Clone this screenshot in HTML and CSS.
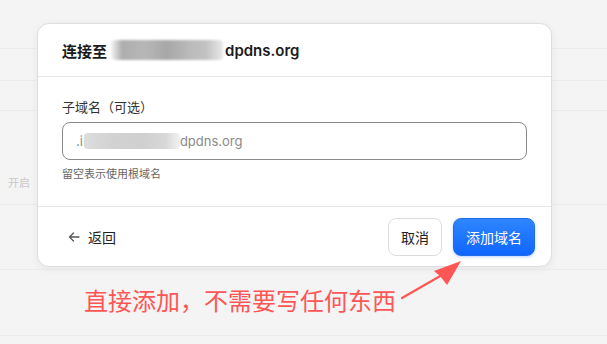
FILE: index.html
```html
<!DOCTYPE html>
<html lang="zh">
<head>
<meta charset="utf-8">
<link rel="stylesheet" href="styles.css">
</head>
<body>
<div class="backdrop">
  <div class="row r1"></div>
  <div class="row r2"></div>
  <div class="row r3"></div>
  <div class="row r4"><span class="faint">开启</span></div>
  <div class="row r5"></div>
  <div class="row r6"></div>
</div>

<div class="dialog">
  <div class="dlg-head">
    <span class="title">连接至</span><span class="blur blur-title"></span><span class="title-domain">dpdns.org</span>
  </div>
  <div class="dlg-body">
    <div class="label">子域名（可选）</div>
    <div class="input">
      <span class="ph">.i</span><span class="blur blur-input"></span><span class="ph">dpdns.org</span>
    </div>
    <div class="hint">留空表示使用根域名</div>
  </div>
  <div class="dlg-foot">
    <div class="back">
      <svg class="back-icon" width="14" height="14" viewBox="0 0 14 14"><path d="M12 7H2.5M6.5 3L2.5 7l4 4" fill="none" stroke="#555" stroke-width="1.3" stroke-linecap="round" stroke-linejoin="round"/></svg>
      <span>返回</span>
    </div>
    <div class="actions">
      <button class="btn btn-cancel">取消</button>
      <button class="btn btn-primary">添加域名</button>
    </div>
  </div>
</div>

<div class="note">直接添加，不需要写任何东西</div>
<svg class="arrow" width="80" height="60" viewBox="0 0 80 60">
  <path d="M4 43 L44 20" stroke="#ff5555" stroke-width="2.2" stroke-linecap="round"/>
  <path d="M63 6 L36 16 L42 21 L49 30 Z" fill="#ff5555"/>
</svg>
</body>
</html>
```

FILE: styles.css
```css
* { box-sizing: border-box; }
html, body { margin: 0; padding: 0; }
body {
  width: 607px;
  height: 344px;
  overflow: hidden;
  background: #f4f4f4;
  font-family: "Noto Sans CJK SC", "Liberation Sans", sans-serif;
  position: relative;
}

.backdrop { display: flex; flex-direction: column; }
.row { border-bottom: 1px solid #ececec; }
.r1 { height: 49px; }
.r2 { height: 32px; }
.r3 { height: 30px; }
.r4 { height: 94px; display: flex; align-items: center; padding-left: 8px; }
.r5 { height: 65px; }
.r6 { height: 66px; }
.faint { font-size: 11px; color: #c9c9c9; margin-top: 48px; }

.dialog {
  position: absolute;
  left: 37px;
  top: 23px;
  width: 515px;
  height: 244px;
  background: #fff;
  border: 1px solid #dedede;
  border-radius: 12px;
  box-shadow: 0 2px 8px rgba(0,0,0,0.06);
  display: flex;
  flex-direction: column;
}

.dlg-head {
  height: 53px;
  padding: 0 24px;
  display: flex;
  align-items: center;
  border-bottom: 1px solid #e6e6e6;
  font-size: 15px;
  font-weight: 700;
  color: #1a1a1a;
}
.title-domain { font-family: "Inter", "Liberation Sans", sans-serif; font-weight: 600; font-size: 15px; }
.blur {
  display: inline-block;
  border-radius: 4px;
}
.blur-title {
  width: 112px;
  height: 20px;
  margin: 0 2px 0 4px;
  background: linear-gradient(90deg, #f2f2f2 0%, #9a9a9a 10%, #a6a6a6 30%, #929292 50%, #aaaaaa 70%, #b4b4b4 85%, #e4e4e4 100%);
  opacity: 0.8;
  filter: blur(1.2px);
}
.blur-input {
  width: 96px;
  height: 16px;
  margin-left: 1px;
  background: linear-gradient(90deg, #dddddd 0%, #d2d2d2 30%, #cfcfcf 60%, #d8d8d8 85%, #f2f2f2 100%);
  filter: blur(0.6px);
}

.dlg-body {
  padding: 21px 24px 0 24px;
  height: 130px;
  border-bottom: 1px solid #e6e6e6;
  display: flex;
  flex-direction: column;
}
.label { font-size: 13px; color: #333; line-height: 18px; margin-bottom: 6px; }
.input {
  height: 38px;
  border: 1.5px solid #8a8a8a;
  border-radius: 8px;
  display: flex;
  align-items: center;
  padding-left: 13px;
  font-family: "Inter", "Liberation Sans", sans-serif;
  font-size: 13px;
  color: #8a8a8a;
}
.hint { font-size: 11px; color: #666; margin-top: 5px; line-height: 16px; }

.dlg-foot {
  flex: 1;
  display: flex;
  align-items: center;
  justify-content: space-between;
  padding: 0 16px 0 29px;
}
.back { display: flex; align-items: center; gap: 7px; font-size: 14px; color: #222; }
.back-icon { display: block; }
.actions { display: flex; gap: 11px; }
.btn {
  height: 38px;
  border-radius: 8px;
  font-family: "Noto Sans CJK SC", sans-serif;
  font-size: 14px;
  padding: 0 12px;
  white-space: nowrap;
  cursor: pointer;
}
.btn-cancel {
  background: #fff;
  border: 1px solid #dcdcdc;
  color: #222;
}
.btn-primary {
  border: 1px solid #1e6fe6;
  background: linear-gradient(180deg, #2f86ff 0%, #0f66ff 100%);
  color: #fff;
  box-shadow: 0 1px 3px rgba(20,100,255,0.3);
}

.note {
  position: absolute;
  left: 84px;
  top: 284px;
  font-size: 24px;
  line-height: 32px;
  color: #ff5555;
}
.arrow {
  position: absolute;
  left: 398px;
  top: 255px;
}
```
